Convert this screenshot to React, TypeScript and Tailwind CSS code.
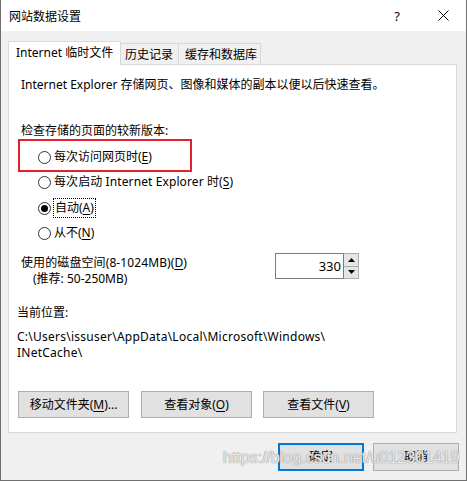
import React from "react";

const U = ({ c }: { c: string }) => <span className="underline underline-offset-2">{c}</span>;

function Radio({ checked }: { checked?: boolean }) {
  return (
    <svg width="13" height="13" viewBox="0 0 13 13" className="shrink-0">
      <circle cx="6.5" cy="6.5" r="6" fill="white" stroke="#333333" strokeWidth="1" />
      {checked && <circle cx="6.5" cy="6.5" r="3.5" fill="#000000" />}
    </svg>
  );
}

function Btn({ children, w, cls = "" }: { children: React.ReactNode; w: string; cls?: string }) {
  return (
    <div className={`${w} h-[27px] bg-[#e1e1e1] border border-[#adadad] flex items-center justify-center ${cls}`}>
      {children}
    </div>
  );
}

export default function App() {
  return (
    <div className="relative w-[467px] h-[481px] bg-[#f0f0f0] border-x border-b border-[#707070] flex flex-col text-[12px] leading-[16px] text-black font-['Noto_Sans','Noto_Sans_CJK_SC',sans-serif]">
      {/* title bar */}
      <div className="h-[31px] bg-white flex items-center shrink-0">
        <div className="pl-[8px] font-['Noto_Sans_CJK_SC',sans-serif] text-[12px] text-black">网站数据设置</div>
        <div className="ml-auto flex h-full">
          <div className="w-[46px] h-full flex items-center justify-center text-[13px]">?</div>
          <div className="w-[46px] h-full flex items-center justify-center">
            <svg width="11" height="11" viewBox="0 0 11 11">
              <path d="M0.5 0.5 L10.5 10.5 M10.5 0.5 L0.5 10.5" stroke="#000" strokeWidth="1" />
            </svg>
          </div>
        </div>
      </div>

      {/* tabs */}
      <div className="mt-[10px] ml-[7px] h-[24px] flex items-end shrink-0">
        <div className="relative z-10 w-[113px] h-[24px] bg-white border-l border-t border-r border-[#d9d9d9] pl-[7px] pb-[2px] flex items-center">
          Internet 临时文件
        </div>
        <div className="w-[58px] h-[22px] bg-[#f0f0f0] border-t border-r border-[#d9d9d9] pl-[4px] flex items-center">
          历史记录
        </div>
        <div className="w-[82px] h-[22px] bg-[#f0f0f0] border-t border-r border-[#d9d9d9] pl-[6px] flex items-center">
          缓存和数据库
        </div>
      </div>

      {/* panel */}
      <div className="relative -mt-px ml-[7px] w-[449px] bg-white border border-[#d9d9d9] pt-[12px] pb-[14px] flex flex-col shrink-0">
        <div className="pl-[12px] h-[16px]">Internet Explorer 存储网页、图像和媒体的副本以便以后快速查看。</div>
        <div className="pl-[12px] h-[16px] mt-[30px]">检查存储的页面的较新版本:</div>

        <div className="mt-[8px] pl-[29px] h-[20px] flex items-center gap-[3px]">
          <Radio />
          <span>每次访问网页时(<U c="E" />)</span>
        </div>
        <div className="mt-[5px] pl-[29px] h-[20px] flex items-center gap-[3px]">
          <Radio />
          <span className="tracking-[0.1px]">每次启动 Internet Explorer 时(<U c="S" />)</span>
        </div>
        <div className="mt-[6px] pl-[29px] h-[20px] flex items-center gap-[2px]">
          <Radio checked />
          <span className="border border-dotted border-black px-px leading-[18px]">自动(<U c="A" />)</span>
        </div>
        <div className="mt-[5px] pl-[29px] h-[20px] flex items-center gap-[3px]">
          <Radio />
          <span>从不(<U c="N" />)</span>
        </div>

        <div className="mt-[10px] flex items-start">
          <div className="w-[266px] pl-[12px] pt-[2px] flex flex-col">
            <div className="h-[16px] tracking-[0.1px]">使用的磁盘空间(8-1024MB)(<U c="D" />)</div>
            <div className="h-[16px] pl-[12px]">(推荐: 50-250MB)</div>
          </div>
          <div className="w-[84px] h-[26px] flex">
            <div className="flex-1 border-l border-y border-[#7a7a7a] flex items-center justify-end pr-[2px] text-[13px]">330</div>
            <div className="w-[16px] h-full flex flex-col border border-[#acacac] border-l-[#7a7a7a]">
              <div className="flex-1 bg-[#e5e5e5] border-b border-[#acacac] flex items-center justify-center">
                <svg width="7" height="4" viewBox="0 0 7 4"><path d="M3.5 0 L7 4 L0 4 Z" fill="#000" /></svg>
              </div>
              <div className="flex-1 bg-[#e5e5e5] flex items-center justify-center">
                <svg width="7" height="4" viewBox="0 0 7 4"><path d="M0 0 L7 0 L3.5 4 Z" fill="#000" /></svg>
              </div>
            </div>
          </div>
        </div>

        <div className="mt-[18px] pl-[8px] h-[16px]">当前位置:</div>
        <div className="mt-[8px] pl-[8px] flex flex-col tracking-[0.25px]">
          <div className="h-[16px]">C:\Users\issuser\AppData\Local\Microsoft\Windows\</div>
          <div className="h-[16px]">INetCache\</div>
        </div>

        <div className="mt-[30px] pl-[9px] flex">
          <Btn w="w-[111px]" cls="h-[26px]">移动文件夹(<U c="M" />)...</Btn>
          <Btn w="w-[111px] ml-[12px]" cls="h-[26px]">查看对象(<U c="O" />)</Btn>
          <Btn w="w-[111px] ml-[11px]" cls="h-[26px]">查看文件(<U c="V" />)</Btn>
        </div>

        {/* red annotation box */}
        <div className="absolute left-[9px] top-[74px] w-[174px] h-[33px] border-2 border-[#e4202c]" />
      </div>

      {/* dialog buttons */}
      <div className="mt-[10px] pr-[7px] flex justify-end gap-[9px]">
        <div className="w-[86px] h-[28px] bg-[#e1e1e1] border-2 border-[#0078d7] flex items-center justify-center">确定</div>
        <div className="w-[86px] h-[28px] bg-[#e1e1e1] border border-[#adadad] flex items-center justify-center">取消</div>
      </div>

      {/* watermark */}
      <div className="absolute left-[222px] top-[448px] text-[16px] leading-[20px] font-['Liberation_Sans',sans-serif] text-white/80 [text-shadow:0_0_1px_#8a8a8a,0_0_1px_#8a8a8a] pointer-events-none">
        https://blog.csdn.net/u012301419
      </div>
    </div>
  );
}
